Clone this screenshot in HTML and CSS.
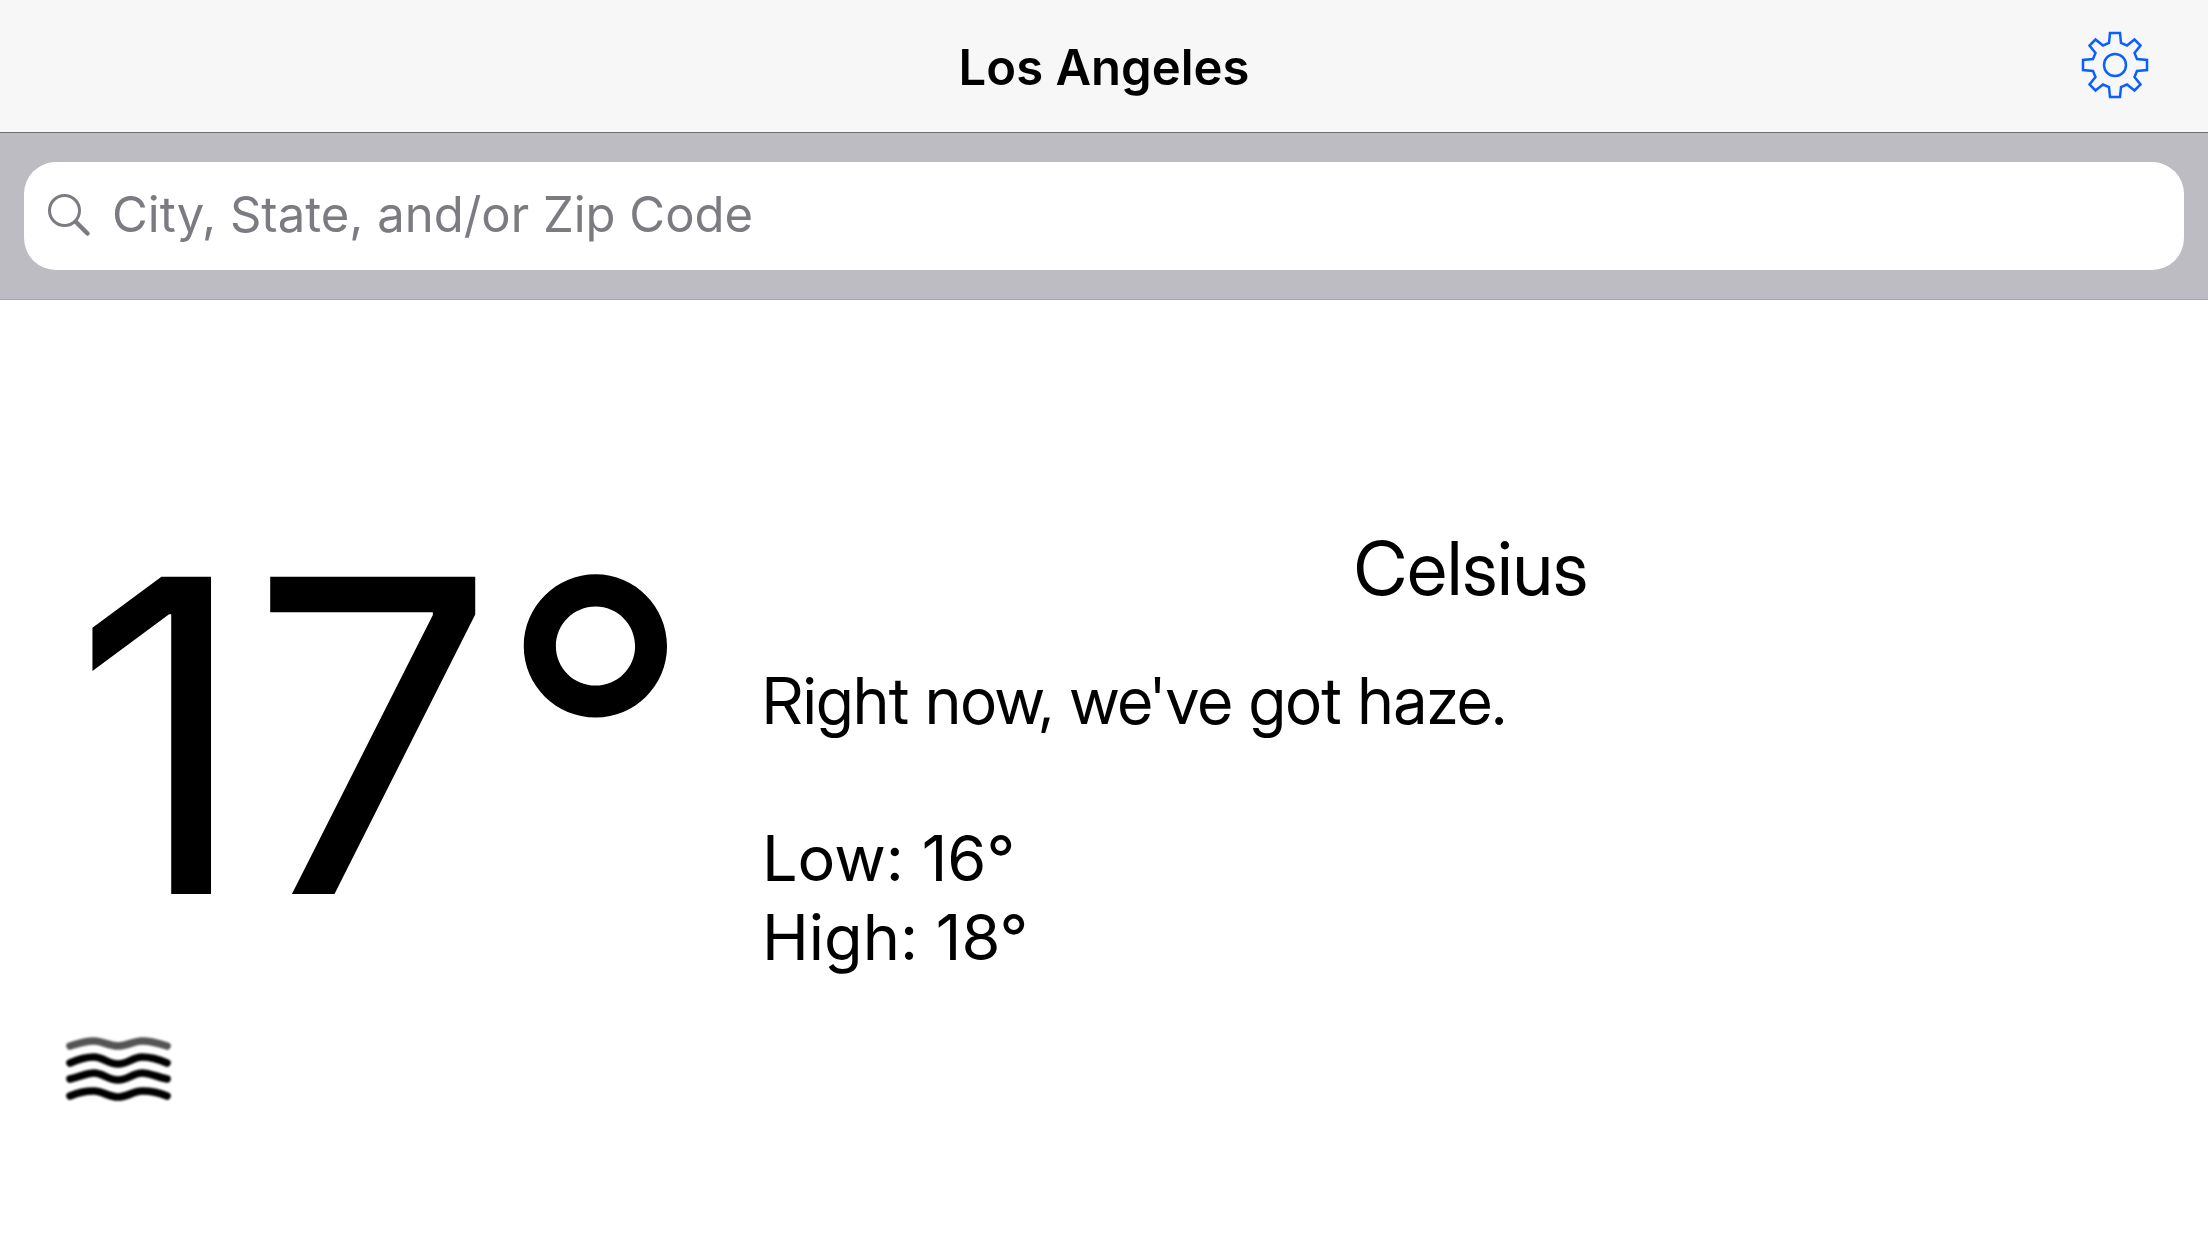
FILE: index.html
```html
<!DOCTYPE html>
<html lang="en">
<head>
  <meta charset="utf-8">
  <meta name="viewport" content="width=device-width, initial-scale=1">
  <title>Los Angeles</title>
  <link rel="stylesheet" href="styles.css">
</head>
<body>
  <header class="navbar">
    <h1 class="navbar-title">Los Angeles</h1>
    <button class="settings" type="button" aria-label="Settings">
      <svg width="72" height="72" viewBox="-36 -36 72 72" fill="none" stroke="currentColor" stroke-width="2.500" aria-hidden="true">
        <path d="M-5-32H5L6-22L12-19.500L19.500-25.500L25.500-19.500L19.500-12L22-6L32-5V5L22 6L19.500 12L25.500 19.500L19.500 25.500L12 19.500L6 22L5 32H-5L-6 22L-12 19.500L-19.500 25.500L-25.500 19.500L-19.500 12L-22 6L-32 5V-5L-22-6L-19.500-12L-25.500-19.500L-19.500-25.500L-12-19.500L-6-22Z"/>
        <circle r="11"/>
      </svg>
    </button>
  </header>

  <form class="searchbar" role="search">
    <label class="search-field">
      <svg class="search-icon" width="44" height="44" viewBox="0 0 44 44" fill="none" stroke="currentColor" aria-hidden="true">
        <circle cx="16.500" cy="16.500" r="15" stroke-width="3"/>
        <path d="M28 28L39.500 39.500" stroke-width="4.500" stroke-linecap="round"/>
      </svg>
      <input class="search-input" type="text" aria-label="Search location" placeholder="City, State, and/or Zip Code">
    </label>
  </form>

  <main class="weather">
    <div class="current">
      <p class="temperature">17°</p>
      <svg class="condition" width="108" height="70" viewBox="0 0 108 70" fill="none" stroke="#000" stroke-width="7.600" stroke-linecap="round" role="img" aria-label="Haze">
        <path stroke="#555" d="M6 12C15 9 23 7 30 7C39 7 44 12 54 12C64 12 69 7 78 7C85 7 94 9 103 12"/>
        <path d="M6 29C15 25 23 23 30 23C39 23 44 30 54 30C64 30 69 23 78 23C85 23 94 25 103 29"/>
        <path d="M6 45C15 43 23 39 30 39C39 39 44 46 54 46C64 46 69 39 78 39C85 39 94 43 103 45"/>
        <path d="M6 62C15 58 23 57 30 57C39 57 44 63 54 63C64 63 69 57 78 57C85 57 94 58 103 62"/>
      </svg>
    </div>
    <div class="details">
      <p class="unit">Celsius</p>
      <p class="summary">Right now, we've got haze.</p>
      <p class="range">Low: 16°<br>High: 18°</p>
    </div>
  </main>
</body>
</html>
```
FILE: styles.css
```css
* {
  box-sizing: border-box;
}

body {
  margin: 0;
  background: #fff;
  color: #000;
  font-family: Inter, "Liberation Sans", sans-serif;
}

h1,
p {
  margin: 0;
}

.navbar {
  display: grid;
  grid-template-columns: 1fr auto 1fr;
  align-items: start;
  padding: 29px 57px 25px;
  background: #f7f7f7;
  border-bottom: 1px solid #6d6d70;
}

.navbar-title {
  grid-column: 2;
  font-size: 49px;
  font-weight: 600;
  line-height: 78px;
}

.settings {
  justify-self: end;
  display: flex;
  padding: 0;
  border: 0;
  background: none;
  color: #0a60ff;
}

.searchbar {
  padding: 29px 24px;
  background: #bdbcc2;
  border-bottom: 1px solid #a9a8ad;
}

.search-field {
  display: flex;
  align-items: center;
  gap: 20px;
  height: 108px;
  padding: 0 24px;
  border-radius: 32px;
  background: #fff;
  color: #7c7b81;
}

.search-icon {
  flex: none;
}

.search-input {
  flex: 1;
  min-width: 0;
  padding: 0 0 2px;
  border: 0;
  outline: 0;
  background: none;
  color: #000;
  font: 400 49px/60px Inter, "Liberation Sans", sans-serif;
}

.search-input::placeholder {
  color: #7c7b81;
  opacity: 1;
}

.weather {
  display: grid;
  grid-template-columns: 642px 1fr;
  gap: 56px;
  padding: 168px 28px 84px 64px;
}

.temperature {
  padding-left: 8px;
  font-size: 436px;
  line-height: 536px;
}

.condition {
  display: block;
  margin-top: 30px;
  filter: blur(1px);
}

.details {
  padding-top: 56px;
  line-height: 79px;
}

.unit,
.summary {
  font-family: "Inter Display", Inter, "Liberation Sans", sans-serif;
}

.unit {
  margin-bottom: 49px;
  font-size: 74px;
  line-height: 88px;
  text-align: center;
}

.summary {
  font-size: 65px;
}

.range {
  margin-top: 79px;
  font-size: 63px;
}
```
